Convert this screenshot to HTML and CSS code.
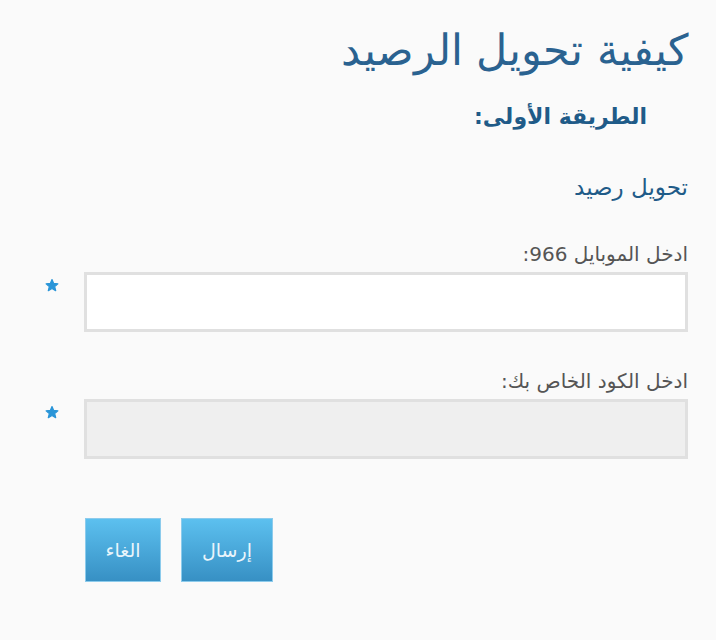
FILE: index.html
```html
<!DOCTYPE html>
<html lang="ar" dir="rtl">
<head>
<meta charset="utf-8">
<link rel="stylesheet" href="styles.css">
</head>
<body>
<main class="page">
  <h1 class="title">كيفية تحويل الرصيد</h1>
  <h2 class="method">الطريقة الأولى:</h2>
  <p class="subtitle">تحويل رصيد</p>
  <form class="form">
    <div class="field">
      <label class="label">ادخل الموبايل 966:</label>
      <div class="row">
        <input class="input" type="text">
        <svg class="star" width="14" height="13" viewBox="0 0 14 13" aria-hidden="true"><path d="M7 0.6 L8.7 4.4 L12.9 4.8 L9.7 7.6 L10.7 11.7 L7 9.5 L3.3 11.7 L4.3 7.6 L1.1 4.8 L5.3 4.4 Z" fill="#2a95d8" stroke="#2a95d8" stroke-width="1.2" stroke-linejoin="round"/></svg>
      </div>
    </div>
    <div class="field">
      <label class="label">ادخل الكود الخاص بك:</label>
      <div class="row">
        <input class="input input-disabled" type="text">
        <svg class="star" width="14" height="13" viewBox="0 0 14 13" aria-hidden="true"><path d="M7 0.6 L8.7 4.4 L12.9 4.8 L9.7 7.6 L10.7 11.7 L7 9.5 L3.3 11.7 L4.3 7.6 L1.1 4.8 L5.3 4.4 Z" fill="#2a95d8" stroke="#2a95d8" stroke-width="1.2" stroke-linejoin="round"/></svg>
      </div>
    </div>
    <div class="actions">
      <button type="button" class="btn btn-send">إرسال</button>
      <button type="button" class="btn btn-cancel">الغاء</button>
    </div>
  </form>
</main>
</body>
</html>
```
FILE: styles.css
```css
html, body {
  margin: 0;
  padding: 0;
  background: #fafafa;
}
body {
  font-family: "DejaVu Sans", "Noto Sans", sans-serif;
  color: #555;
}
.page {
  padding: 24px 28px 0 28px;
}
.title {
  margin: 0;
  font-size: 43px;
  font-weight: 200;
  color: #2a6290;
  line-height: 52px;
}
.method {
  margin: 23px 41px 0 0;
  font-size: 22px;
  font-weight: bold;
  color: #1f5b88;
  line-height: 36px;
}
.subtitle {
  margin: 37px 0 0 0;
  font-size: 23px;
  color: #1f5b88;
  line-height: 30px;
}
.form {
  margin-top: 38px;
}
.field {
  margin-bottom: 35px;
}
.label {
  display: block;
  font-size: 20px;
  color: #555;
  line-height: 28px;
  margin-bottom: 4px;
}
.row {
  display: flex;
  align-items: flex-start;
  gap: 25px;
}
.input {
  width: 604px;
  height: 60px;
  box-sizing: border-box;
  border: 3px solid #e0e0e0;
  background: #fff;
  margin: 0;
  padding: 0 10px;
}
.input-disabled {
  background: #efefef;
}
.star {
  display: block;
  margin-top: 7px;
}
.actions {
  display: flex;
  gap: 20px;
  padding-right: 415px;
  margin-top: 59px;
}
.btn {
  height: 64px;
  border: 1px solid #8ccbec;
  background: linear-gradient(#5cc0ef, #3790c4);
  color: #e9f5fb;
  font-family: "DejaVu Sans", sans-serif;
  font-size: 19px;
  margin: 0;
  padding: 0;
}
.btn-send { width: 92px; }
.btn-cancel { width: 76px; }
```
